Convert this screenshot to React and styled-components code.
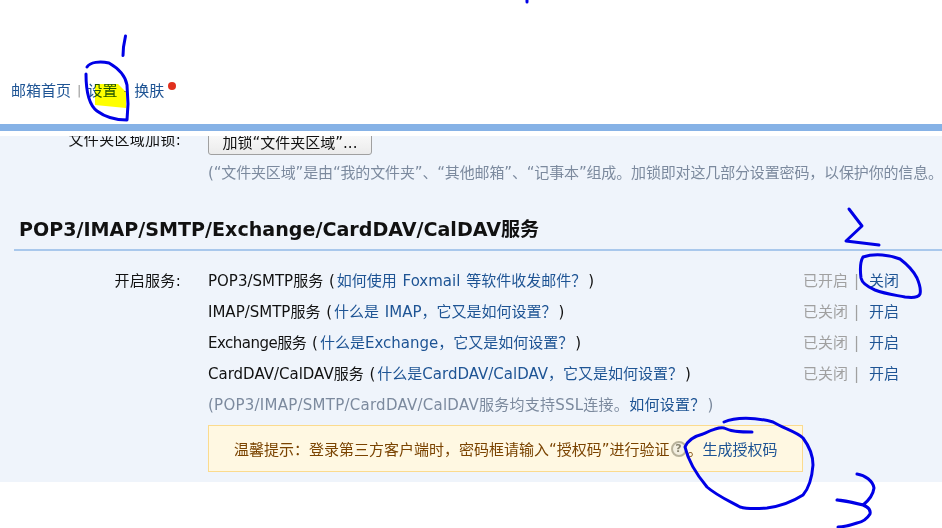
import React from 'react';
import styled, { createGlobalStyle } from 'styled-components';

const Global = createGlobalStyle`
    html, body { margin: 0; padding: 0; background: #fff; }
    body {
        width: 942px;
        height: 528px;
        overflow: hidden;
        font-family: "DejaVu Sans", "Noto Sans CJK SC", sans-serif;
        font-size: 15px;
        color: #111;
    }
`;
const Page = styled.div`
    position: relative;
    width: 942px;
    height: 528px;
    overflow: hidden;
`;
const Header = styled.div`
    height: 124px;
    box-sizing: border-box;
    padding: 81px 0 0 11px;
    display: flex;
    align-items: flex-start;
    font-size: 15px;
    line-height: 20px;
`;
const NavLink = styled.a`
    color: #1e5494;
    text-decoration: none;
    position: relative;
`;
const NavSep = styled.span`
    color: #999;
    margin: 0 6px;
    font-size: 13px;
`;
const RedDot = styled.span`
    position: absolute;
    top: 1px;
    right: -12px;
    width: 8px;
    height: 8px;
    border-radius: 50%;
    background: #e0301e;
`;
const BlueBar = styled.div`
    height: 7px;
    background: #86b2e6;
    margin-bottom: 5px;
`;
const Panel = styled.div`
    height: 346px;
    background: #eff4fb;
    overflow: hidden;
`;
const Row = styled.div`
    display: flex;
    padding-left: 208px;
    position: relative;
`;
const LockRow = styled(Row)`
    margin-top: -8px;
    height: 27px;
`;
const RowLabel = styled.span`
    position: absolute;
    left: 0;
    width: 181px;
    text-align: right;
    font-size: 15px;
    line-height: 24px;
    letter-spacing: 0.3px;
`;
const ServiceLabel = styled(RowLabel)`
    line-height: 31px;
`;
const LockButton = styled.button`
    width: 164px;
    height: 27px;
    box-sizing: border-box;
    padding: 0;
    border: 1px solid #a0a0a0;
    border-radius: 3px;
    background: linear-gradient(#fdfdfd, #ebebeb);
    color: #111;
    font-family: inherit;
    font-size: 15px;
    white-space: nowrap;
`;
const Hint = styled.div`
    margin: 8px 0 0 208px;
    color: #7c8a9e;
    font-size: 15px;
    line-height: 20px;
    letter-spacing: -0.15px;
    white-space: nowrap;
`;
const SectionTitle = styled.h2`
    margin: 33px 0 0 14px;
    padding: 0 0 6px 5px;
    border-bottom: 2px solid #a9c8ec;
    font-size: 19.1px;
    line-height: 27px;
    font-weight: 700;
    color: #111;
    white-space: nowrap;
`;
const Services = styled.div`
    margin-top: 15px;
`;
const ServiceRow = styled(Row)`
    height: 31px;
    line-height: 31px;
    white-space: nowrap;
    justify-content: space-between;
    padding-right: 42px;
`;
const ServiceText = styled.div`
    font-size: 15px;
    word-spacing: 1px;
`;
const ServiceName = styled.span`
    letter-spacing: ${props => props.$tight ? "-0.5px" : "0"};
`;
const Link = styled.a`
    color: #1e5494;
    text-decoration: none;
`;
const HelpLink = styled(Link)`
    margin: 0 2px;
`;
const NoteLink = styled(Link)`
    margin-right: 2px;
`;
const Status = styled.div`
    display: flex;
    width: 97px;
    font-size: 15px;
    color: #a0a0a0;
`;
const StatusSep = styled.span`
    margin: 0 10px 0 6px;
`;
const Note = styled(Hint)`
    margin-top: 0;
    line-height: 31px;
    letter-spacing: 0.25px;
`;
const Tip = styled.div`
    margin: 4px 0 0 208px;
    width: 595px;
    height: 47px;
    box-sizing: border-box;
    padding-left: 25px;
    display: flex;
    align-items: center;
    background: #fff8e2;
    border: 1px solid #fbdb8e;
    color: #7a4300;
    font-size: 15px;
    white-space: nowrap;
`;
const HelpIcon = styled.span`
    width: 16px;
    height: 16px;
    margin: 0 1px 0 1px;
    box-sizing: border-box;
    display: inline-flex;
    align-items: center;
    justify-content: center;
    border: 2px solid #b9b39c;
    border-radius: 50%;
    background: #f3efe0;
    color: #8a8672;
    font-size: 11px;
    font-weight: 700;
`;
const Ink = styled.svg`
    position: absolute;
    left: 0;
    top: 0;
    pointer-events: none;
`;

// full-width punctuation, written as escapes so it stays full-width
const COMMA = '\uFF0C';
const ASK = '\uFF1F';
const COLON = '\uFF1A';

const services = [
    { name: 'POP3/SMTP服务', help: `如何使用 Foxmail 等软件收发邮件${ASK}`, on: true },
    { name: 'IMAP/SMTP服务', help: `什么是 IMAP${COMMA}它又是如何设置${ASK}`, on: false },
    { name: 'Exchange服务', help: `什么是Exchange${COMMA}它又是如何设置${ASK}`, on: false, tight: true },
    { name: 'CardDAV/CalDAV服务', help: `什么是CardDAV/CalDAV${COMMA}它又是如何设置${ASK}`, on: false },
];

const App = () => {
    return (
        <Page>
            <Global />
            <Header>
                <NavLink href="#">邮箱首页</NavLink>
                <NavSep>|</NavSep>
                <NavLink href="#">设置</NavLink>
                <NavSep>-</NavSep>
                <NavLink href="#">换肤<RedDot /></NavLink>
            </Header>
            <BlueBar />
            <Panel>
                <LockRow>
                    <RowLabel>文件夹区域加锁:</RowLabel>
                    <LockButton>加锁“文件夹区域”...</LockButton>
                </LockRow>
                <Hint>{`(“文件夹区域”是由“我的文件夹”、“其他邮箱”、“记事本”组成。加锁即对这几部分设置密码${COMMA}以保护你的信息。`}</Hint>
                <SectionTitle>POP3/IMAP/SMTP/Exchange/CardDAV/CalDAV服务</SectionTitle>
                <Services>
                    {services.map((s, i) => (
                        <ServiceRow key={s.name}>
                            {i === 0 && <ServiceLabel>开启服务:</ServiceLabel>}
                            <ServiceText>
                                <ServiceName $tight={s.tight}>{s.name}</ServiceName> (<HelpLink href="#">{s.help}</HelpLink>)
                            </ServiceText>
                            <Status>
                                {s.on ? '已开启' : '已关闭'}
                                <StatusSep>|</StatusSep>
                                <Link href="#">{s.on ? '关闭' : '开启'}</Link>
                            </Status>
                        </ServiceRow>
                    ))}
                    <Note>(POP3/IMAP/SMTP/CardDAV/CalDAV服务均支持SSL连接。<NoteLink href="#">{`如何设置${ASK}`}</NoteLink>)</Note>
                </Services>
                <Tip>
                    {`温馨提示${COLON}登录第三方客户端时${COMMA}密码框请输入“授权码”进行验证`}<HelpIcon>?</HelpIcon>。<Link href="#">生成授权码</Link>
                </Tip>
            </Panel>
            <Ink width="942" height="528" viewBox="0 0 942 528">
                <path d="M95 84 L118 84 L126 92 L126 108 L95 105 Z" fill="#ffff00" style={{ mixBlendMode: 'multiply' }} />
                <g fill="none" stroke="#0000e6" strokeWidth="3" strokeLinecap="round" strokeLinejoin="round">
                    <path d="M527 0.5 L527 2" />
                    <path d="M125.500 36 L123.500 47 L123 55.500" />
                    <path d="M87 67 C90 62 100 61 109 63 C116 67 125 73 127 85 L128 104 L127 120 C116 120 105 117 97 111 C89 105 86 90 86 74" />
                    <path d="M849 209 L862 226 L846 241 L879 245" />
                    <path d="M863 257 C875 253 890 255 900 259 C908 265 914 272 917 278 C920 285 921 290 920 294 C918 298 912 298 905 297 C895 295 885 294 875 290 C868 287 862 283 861 278 C860 270 860 262 863 257 Z" />
                    <path d="M724 422 C735 417 755 417 773 422 C785 429 797 432 803 438 C809 446 813 455 813 465 C812 478 809 488 803 495 C792 502 782 506 767 508 C755 509 747 509 740 507 C727 500 716 495 707 487 C697 475 688 460 685 447 C688 440 695 436 703 434 C712 430 718 427 724 428 C732 432 742 432 752 432" />
                    <path d="M857 474 C865 475 873 481 874 488 C873 496 868 501 863 505 C855 503 845 501 837 500 C845 500 855 503 863 505 C868 507 871 510 870 514 C867 519 862 522 857 523 C851 525 844 527 838 527" />
                </g>
            </Ink>
        </Page>
    );
};

export default App;
